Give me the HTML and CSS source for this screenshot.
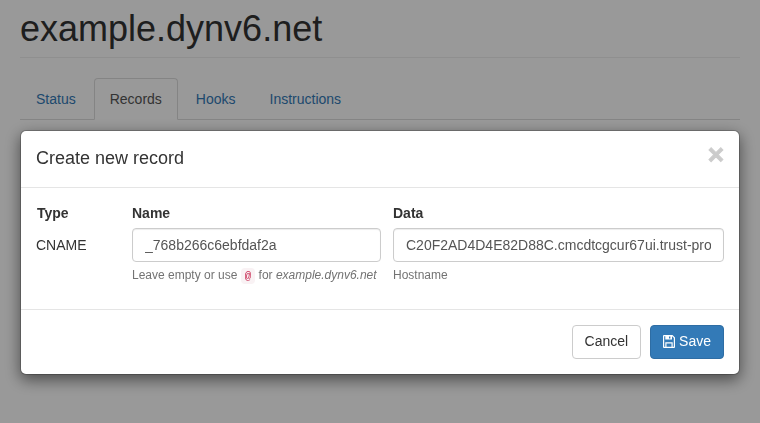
FILE: index.html
```html
<!DOCTYPE html>
<html lang="en">
<head>
  <meta charset="UTF-8">
  <meta name="viewport" content="width=device-width, initial-scale=1.0">
  <title>example.dynv6.net</title>
  <link rel="stylesheet" href="styles.css">
</head>
<body>
  <div class="container">
    <h1 class="page-header">example.dynv6.net</h1>
    <ul class="nav-tabs">
      <li><a href="#">Status</a></li>
      <li class="active"><a href="#">Records</a></li>
      <li><a href="#">Hooks</a></li>
      <li><a href="#">Instructions</a></li>
    </ul>
  </div>

  <div class="backdrop"></div>

  <div class="modal">
    <div class="modal-header">
      <h4>Create new record</h4>
      <button class="close" type="button">×</button>
    </div>
    <form class="modal-body">
      <label class="col-label">Type</label>
      <label class="col-label">Name</label>
      <label class="col-label">Data</label>

      <div class="type-value">CNAME</div>
      <input class="form-control" type="text" value="_768b266c6ebfdaf2a">
      <input class="form-control" type="text" value="C20F2AD4D4E82D88C.cmcdtcgcur67ui.trust-provider.com">

      <div></div>
      <p class="help-block">Leave empty or use <code>@</code> for <em>example.dynv6.net</em></p>
      <p class="help-block">Hostname</p>
    </form>
    <div class="modal-footer">
      <button class="btn" type="button">Cancel</button>
      <button class="btn btn-primary" type="button">
        <svg class="icon-save" viewBox="0 0 12 13" width="12" height="13" aria-hidden="true">
          <path fill-rule="evenodd" d="M1 0h8.500l2.500 2.500v9.500a1 1 0 0 1-1 1h-10a1 1 0 0 1-1-1v-11a1 1 0 0 1 1-1zM1.200 1.200v10.600h1.100v-4.500h7.400v4.500h1.100v-8.800l-1.800-1.800v3.300h-6.700v-3.300zM3.500 8.500v3.300h5v-3.300zM6 1.400v2h1.400v-2z"/>
        </svg>
        Save
      </button>
    </div>
  </div>
</body>
</html>
```

FILE: styles.css
```css
/* Reset styles */
* {
  box-sizing: border-box;
}

/* Global styles */
body {
  margin: 0;
  font-family: "Liberation Sans", Arial, sans-serif;
  font-size: 14px;
  line-height: 1.42857;
  color: #333;
  background-color: #fff;
  overflow: hidden;
}

.container {
  padding: 0 20px;
}

.page-header {
  margin: 0 0 20px;
  padding: 9px 0 8px;
  font-size: 36px;
  font-weight: 500;
  line-height: 1.1;
  border-bottom: 1px solid #eee;
}

/* Tabs */
.nav-tabs {
  display: flex;
  gap: 2px;
  margin: 0;
  padding: 0;
  list-style: none;
  border-bottom: 1px solid #ddd;
}

.nav-tabs a {
  display: block;
  margin-bottom: -1px;
  padding: 11px 15px 9px;
  color: #337ab7;
  text-decoration: none;
  border: 1px solid transparent;
  border-radius: 4px 4px 0 0;
}

.nav-tabs .active a {
  color: #555;
  background-color: #fff;
  border-color: #ddd #ddd #fff;
}

/* Modal */
.backdrop {
  position: fixed;
  inset: 0;
  background-color: #000;
  opacity: 0.4;
}

.modal {
  position: fixed;
  top: 130px;
  left: 20px;
  width: 720px;
  background-color: #fff;
  border: 1px solid rgba(0, 0, 0, 0.2);
  border-radius: 6px;
  background-clip: padding-box;
  box-shadow: 0 5px 15px rgba(0, 0, 0, 0.5);
}

.modal-header {
  display: flex;
  justify-content: space-between;
  height: 57px;
  padding: 15px;
  border-bottom: 1px solid #e5e5e5;
}

.modal-header h4 {
  margin: 0;
  font-size: 18px;
  font-weight: 500;
  line-height: 1.42857;
}

.close {
  margin-top: -6px;
  padding: 0;
  height: 30px;
  font-family: inherit;
  font-size: 28px;
  font-weight: 700;
  line-height: 30px;
  color: #000;
  -webkit-text-stroke: 1px #000;
  background: none;
  border: 0;
  opacity: 0.2;
}

.modal-body {
  display: grid;
  grid-template-columns: 84px 249px 331px;
  column-gap: 12px;
  padding: 15px;
}

.col-label {
  margin-bottom: 5px;
  padding-top: 1px;
  height: 20px;
  font-weight: 700;
}

.col-label:first-child {
  padding-left: 1px;
}

.type-value {
  padding-top: 8px;
}

.form-control {
  width: 100%;
  height: 34px;
  padding: 6px 12px;
  font-family: inherit;
  font-size: 14px;
  color: #555;
  background-color: #fff;
  border: 1px solid #ccc;
  border-radius: 4px;
  box-shadow: inset 0 1px 1px rgba(0, 0, 0, 0.075);
}

.help-block {
  margin: 5px 0 10px;
  font-size: 12px;
  color: #737373;
}

code {
  padding: 2px 4px;
  font-family: "Liberation Mono", monospace;
  font-size: 90%;
  color: #c7254e;
  background-color: #f9f2f4;
  border-radius: 4px;
}

.modal-footer {
  display: flex;
  justify-content: flex-end;
  gap: 9px;
  padding: 15px;
  border-top: 1px solid #e5e5e5;
}

.btn {
  height: 34px;
  padding: 6px 12px;
  font-family: inherit;
  font-size: 14px;
  line-height: 1.42857;
  color: #333;
  background-color: #fff;
  border: 1px solid #ccc;
  border-radius: 4px;
}

.btn-primary {
  color: #fff;
  background-color: #337ab7;
  border-color: #2e6da4;
}

.icon-save {
  vertical-align: -2px;
  fill: #fff;
}
```
